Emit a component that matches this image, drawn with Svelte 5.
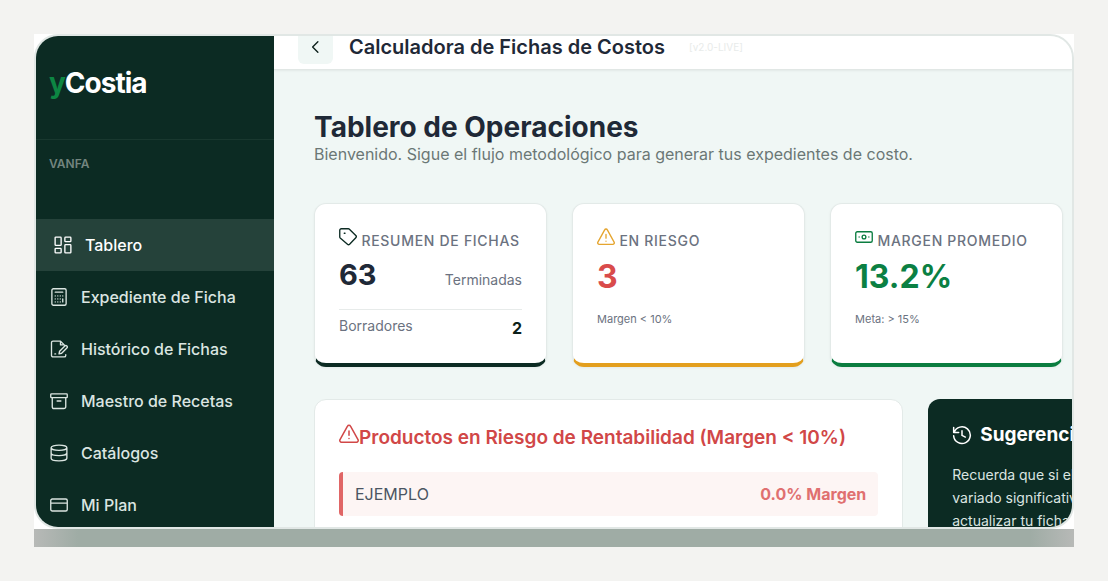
<script lang="ts">
  type NavItem = { label: string; icon: string; active?: boolean };

  const nav: NavItem[] = [
    { label: 'Tablero', icon: 'board', active: true },
    { label: 'Expediente de Ficha', icon: 'calc' },
    { label: 'Histórico de Fichas', icon: 'file' },
    { label: 'Maestro de Recetas', icon: 'archive' },
    { label: 'Catálogos', icon: 'database' },
    { label: 'Mi Plan', icon: 'card' },
  ];

  const tips = ['Recuerda que si el', 'variado significativamente', 'actualizar tu ficha'];

  // 24x24 stroke icons
  const icons: Record<string, string> = {
    board: 'M2.500 1.500h6a1 1 0 0 1 1 1v9a1 1 0 0 1-1 1h-6a1 1 0 0 1-1-1v-9a1 1 0 0 1 1-1zM15.500 1.500h6a1 1 0 0 1 1 1v4a1 1 0 0 1-1 1h-6a1 1 0 0 1-1-1v-4a1 1 0 0 1 1-1zM15.500 11.500h6a1 1 0 0 1 1 1v9a1 1 0 0 1-1 1h-6a1 1 0 0 1-1-1v-9a1 1 0 0 1 1-1zM2.500 16.500h6a1 1 0 0 1 1 1v4a1 1 0 0 1-1 1h-6a1 1 0 0 1-1-1v-4a1 1 0 0 1 1-1z',
    calc: 'M4.500 1h15a2 2 0 0 1 2 2v18a2 2 0 0 1-2 2h-15a2 2 0 0 1-2-2V3a2 2 0 0 1 2-2zM7 5.500h10M7 10.500h.01M10.400 10.500h.01M13.700 10.500h.01M17 10.500h.01M7 14.500h.01M10.400 14.500h.01M13.700 14.500h.01M7 18.500h.01M10.400 18.500h.01M13.700 18.500h.01M17 14.500v4',
    file: 'M21 19.500v1a2 2 0 0 1-2 2H4a2 2 0 0 1-2-2v-17a2 2 0 0 1 2-2h10l5 5M14 1.500v5h4M6.500 18.500h1M12 18.500l.8-3.500 7-7a1.800 1.800 0 0 1 2.700 2.700l-7 7z',
    archive: 'M2 2.500h20a1 1 0 0 1 1 1v3a1 1 0 0 1-1 1H2a1 1 0 0 1-1-1v-3a1 1 0 0 1 1-1zM3 7.500v12a2.500 2.500 0 0 0 2.500 2.500h13a2.500 2.500 0 0 0 2.500-2.500v-12M9.500 12h5',
    database: 'M22.500 5c0 2-4.700 3.500-10.500 3.500S1.500 7 1.500 5s4.700-3.500 10.500-3.500S22.500 3 22.500 5zM1.500 5v14c0 2 4.700 3.500 10.500 3.500s10.500-1.500 10.500-3.500V5M1.500 12c0 2 4.700 3.500 10.500 3.500s10.500-1.500 10.500-3.500',
    card: 'M3 4h18a2 2 0 0 1 2 2v12a2 2 0 0 1-2 2H3a2 2 0 0 1-2-2V6a2 2 0 0 1 2-2zM1 9.500h22',
    back: 'M14.500 5l-7 7 7 7',
    tag: 'M1 3a2 2 0 0 1 2-2h9.500a2 2 0 0 1 1.400.6l8.500 8.500a2 2 0 0 1 0 2.800l-8.300 8.700a2 2 0 0 1-2.800 0L1.600 13.400A2 2 0 0 1 1 12zM7 7h1',
    warning: 'M10.200 2.500 1.200 18.800A2 2 0 0 0 3 21.800h18a2 2 0 0 0 1.800-3L13.800 2.500a2 2 0 0 0-3.600 0zM12 8.500v5M12 17.500h.01',
    cash: 'M3 5h18a2 2 0 0 1 2 2v10a2 2 0 0 1-2 2H3a2 2 0 0 1-2-2V7a2 2 0 0 1 2-2zM14.500 12a2.500 2.500 0 1 1-5 0 2.500 2.500 0 0 1 5 0zM5.500 12h.01M18.500 12h.01',
    history: 'M2 3v6h6M2.500 9a10 10 0 1 1-.5 4M12 7v5.500l4 2',
  };
</script>

{#snippet icon(name: string)}
  <svg class="icon" viewBox="0 0 24 24" aria-hidden="true"><path d={icons[name]} /></svg>
{/snippet}

<div class="stage">
  <div class="frame">
    <div class="window">
      <aside class="sidebar">
        <div class="brand"><span>y</span>Costia</div>
        <div class="company">VANFA</div>
        <nav>
          {#each nav as item}
            <a href="#{item.icon}" class:active={item.active}>
              {@render icon(item.icon)}
              {item.label}
            </a>
          {/each}
        </nav>
      </aside>

      <div class="page">
        <header class="topbar">
          <div class="topbar-row">
            <button class="back" aria-label="Volver">{@render icon('back')}</button>
            <span class="app-title">Calculadora de Fichas de Costos</span>
            <span class="version">[v2.0-LIVE]</span>
          </div>
        </header>

        <main class="board">
          <h1>Tablero de Operaciones</h1>
          <p class="lead">Bienvenido. Sigue el flujo metodológico para generar tus expedientes de costo.</p>

          <section class="cards">
            <article class="card dark">
              <h2>{@render icon('tag')} <span>Resumen de Fichas</span></h2>
              <div class="split">
                <strong class="count">63</strong>
                <span>Terminadas</span>
              </div>
              <div class="split drafts">
                <span>Borradores</span>
                <strong>2</strong>
              </div>
            </article>

            <article class="card amber">
              <h2>{@render icon('warning')} <span>En Riesgo</span></h2>
              <strong class="figure">3</strong>
              <p class="note">Margen &lt; 10%</p>
            </article>

            <article class="card green">
              <h2>{@render icon('cash')} <span>Margen Promedio</span></h2>
              <strong class="figure">13.2%</strong>
              <p class="note">Meta: &gt; 15%</p>
            </article>
          </section>

          <section class="panels">
            <article class="panel">
              <h3>{@render icon('warning')}Productos en Riesgo de Rentabilidad (Margen &lt; 10%)</h3>
              <div class="risk">
                <span>EJEMPLO</span>
                <strong>0.0% Margen</strong>
              </div>
            </article>

            <article class="tips">
              <h3>{@render icon('history')}Sugerencias</h3>
              {#each tips as line}
                <p>{line}</p>
              {/each}
            </article>
          </section>
        </main>
      </div>
    </div>
    <div class="shade"></div>
  </div>
</div>

<style>
  :global(body) {
    margin: 0;
    background: #f3f3f1;
  }

  .stage {
    box-sizing: border-box;
    height: 100vh;
    padding: 34px;
    font-family: Inter, sans-serif;
    color: #1f2937;
  }

  .frame {
    display: flex;
    flex-direction: column;
    height: 100%;
    background: #fff;
  }

  .window {
    box-sizing: border-box;
    flex: 1;
    min-height: 0;
    display: flex;
    overflow: hidden;
    border: 2px solid #e1e7e5;
    border-radius: 24px;
    background: #f0f7f5;
  }

  /* bottom edge of the frame, lighter at both ends */
  .shade {
    flex: none;
    height: 18px;
    background: linear-gradient(90deg, #b7b9b7, #9faca5 44px, #9faca5 calc(100% - 44px), #b7b9b7);
  }

  .icon {
    flex: none;
    width: 18px;
    height: 18px;
    fill: none;
    stroke: currentColor;
    stroke-width: 1.8;
    stroke-linecap: round;
    stroke-linejoin: round;
  }

  h1, h2, h3, p {
    margin: 0;
  }

  /* Sidebar */
  .sidebar {
    flex: none;
    width: 238px;
    background: #0c2b23;
    color: #dbe5e1;
  }

  .brand {
    box-sizing: border-box;
    height: 104px;
    padding: 30px 13px 0;
    border-bottom: 1px solid #19382f;
    font-size: 28px;
    line-height: 34px;
    font-weight: 700;
    letter-spacing: -1px;
    color: #fff;
  }
  .brand span {
    color: #0d8643;
  }

  .company {
    height: 63px;
    padding: 16px 13px 0;
    font-size: 12px;
    line-height: 16px;
    font-weight: 600;
    color: #73857f;
  }

  nav a {
    display: flex;
    align-items: center;
    gap: 13px;
    height: 52px;
    padding: 0 14px;
    font-size: 16px;
    font-weight: 500;
    color: inherit;
    text-decoration: none;
    white-space: nowrap;
  }
  nav a.active {
    padding-left: 18px;
    background: #25423a;
    color: #fff;
  }

  /* Page */
  .page {
    flex: 1;
    min-width: 0;
    overflow: hidden;
  }

  .topbar {
    box-sizing: border-box;
    display: flex;
    align-items: flex-end;
    height: 34px;
    padding: 0 24px 5px;
    overflow: hidden;
    background: #fff;
    border-bottom: 1px solid #e1e7e5;
    box-shadow: 0 1px 2px rgba(0, 0, 0, 0.06);
  }
  .topbar-row {
    display: flex;
    align-items: center;
    white-space: nowrap;
  }
  .back {
    display: flex;
    align-items: center;
    justify-content: center;
    width: 35px;
    height: 35px;
    padding: 0;
    border: 0;
    border-radius: 6px;
    background: #f0f7f5;
    color: #0c1f1a;
  }
  .app-title {
    margin-left: 16px;
    font-size: 20px;
    line-height: 24px;
    font-weight: 600;
  }
  .version {
    margin-left: 24px;
    font-size: 10px;
    color: #e8ebea;
  }

  /* wider than the window, so the right-hand column runs out of view */
  .board {
    width: 126.2%;
    padding: 40px;
  }

  h1 {
    font-size: 28px;
    line-height: 34px;
    font-weight: 700;
  }
  .lead {
    font-size: 16px;
    line-height: 20px;
    color: #6b7775;
  }

  .cards {
    display: grid;
    grid-template-columns: repeat(4, minmax(0, 1fr));
    gap: 25px;
    margin-top: 39px;
  }

  .card {
    box-sizing: border-box;
    min-height: 164px;
    padding: 24px 24px 20px;
    background: #fff;
    border: 1px solid #e3eae8;
    border-bottom: 4px solid;
    border-radius: 12px;
    box-shadow: 0 1px 3px rgba(0, 0, 0, 0.05);
  }
  .card h2 {
    font-size: 14px;
    line-height: 24px;
    font-weight: 500;
    letter-spacing: 0.05em;
    text-transform: uppercase;
    white-space: nowrap;
    color: #6b7280;
  }
  .dark { border-bottom-color: #0c2b23; }
  .amber { border-bottom-color: #e39f1e; }
  .green { border-bottom-color: #0b7d40; }
  .dark .icon { color: #0c2b23; }
  .amber .icon { color: #e5a52f; }
  .green .icon { color: #0b7d40; }

  .split {
    display: flex;
    align-items: baseline;
    justify-content: space-between;
    font-size: 14px;
    line-height: 16px;
    color: #6b7280;
  }
  .count {
    font-size: 29px;
    line-height: 44px;
    color: #1f2937;
  }
  .drafts {
    align-items: flex-start;
    margin-top: 12px;
    padding-top: 8px;
    border-top: 1px solid #e7ebea;
  }
  .drafts strong {
    font-size: 16px;
    line-height: 20px;
    color: #0c1f1a;
  }

  .figure {
    display: block;
    font-size: 32px;
    line-height: 48px;
    color: #d94b4b;
  }
  .green .figure {
    color: #0b8043;
  }
  .note {
    margin-top: 10px;
    font-size: 11px;
    line-height: 16px;
    color: #6b7280;
  }

  .panels {
    display: grid;
    grid-template-columns: 3fr 2fr;
    gap: 25px;
    margin-top: 32px;
  }
  .panel {
    padding: 24px;
    min-height: 160px;
    background: #fff;
    border: 1px solid #e3eae8;
    border-radius: 12px;
  }
  .panel h3 {
    font-size: 19px;
    line-height: 26px;
    font-weight: 600;
    color: #d14747;
    white-space: nowrap;
  }
  .panel .icon,
  .tips .icon {
    width: 20px;
    height: 20px;
  }

  .risk {
    display: flex;
    align-items: center;
    justify-content: space-between;
    height: 44px;
    margin-top: 21px;
    padding: 0 12px;
    border-left: 4px solid #e06666;
    border-radius: 4px;
    background: #fdf5f4;
    font-size: 16px;
    color: #4b5563;
  }
  .risk strong {
    font-weight: 700;
    color: #e07070;
  }

  .tips {
    padding: 24px;
    border-radius: 12px;
    background: #0c2b23;
    color: #dbe5e1;
    white-space: nowrap;
  }
  .tips h3 {
    display: flex;
    align-items: center;
    gap: 8px;
    margin-bottom: 16px;
    font-size: 19px;
    line-height: 24px;
    font-weight: 700;
    color: #fff;
  }
  .tips p {
    font-size: 14px;
    line-height: 23px;
  }
</style>
